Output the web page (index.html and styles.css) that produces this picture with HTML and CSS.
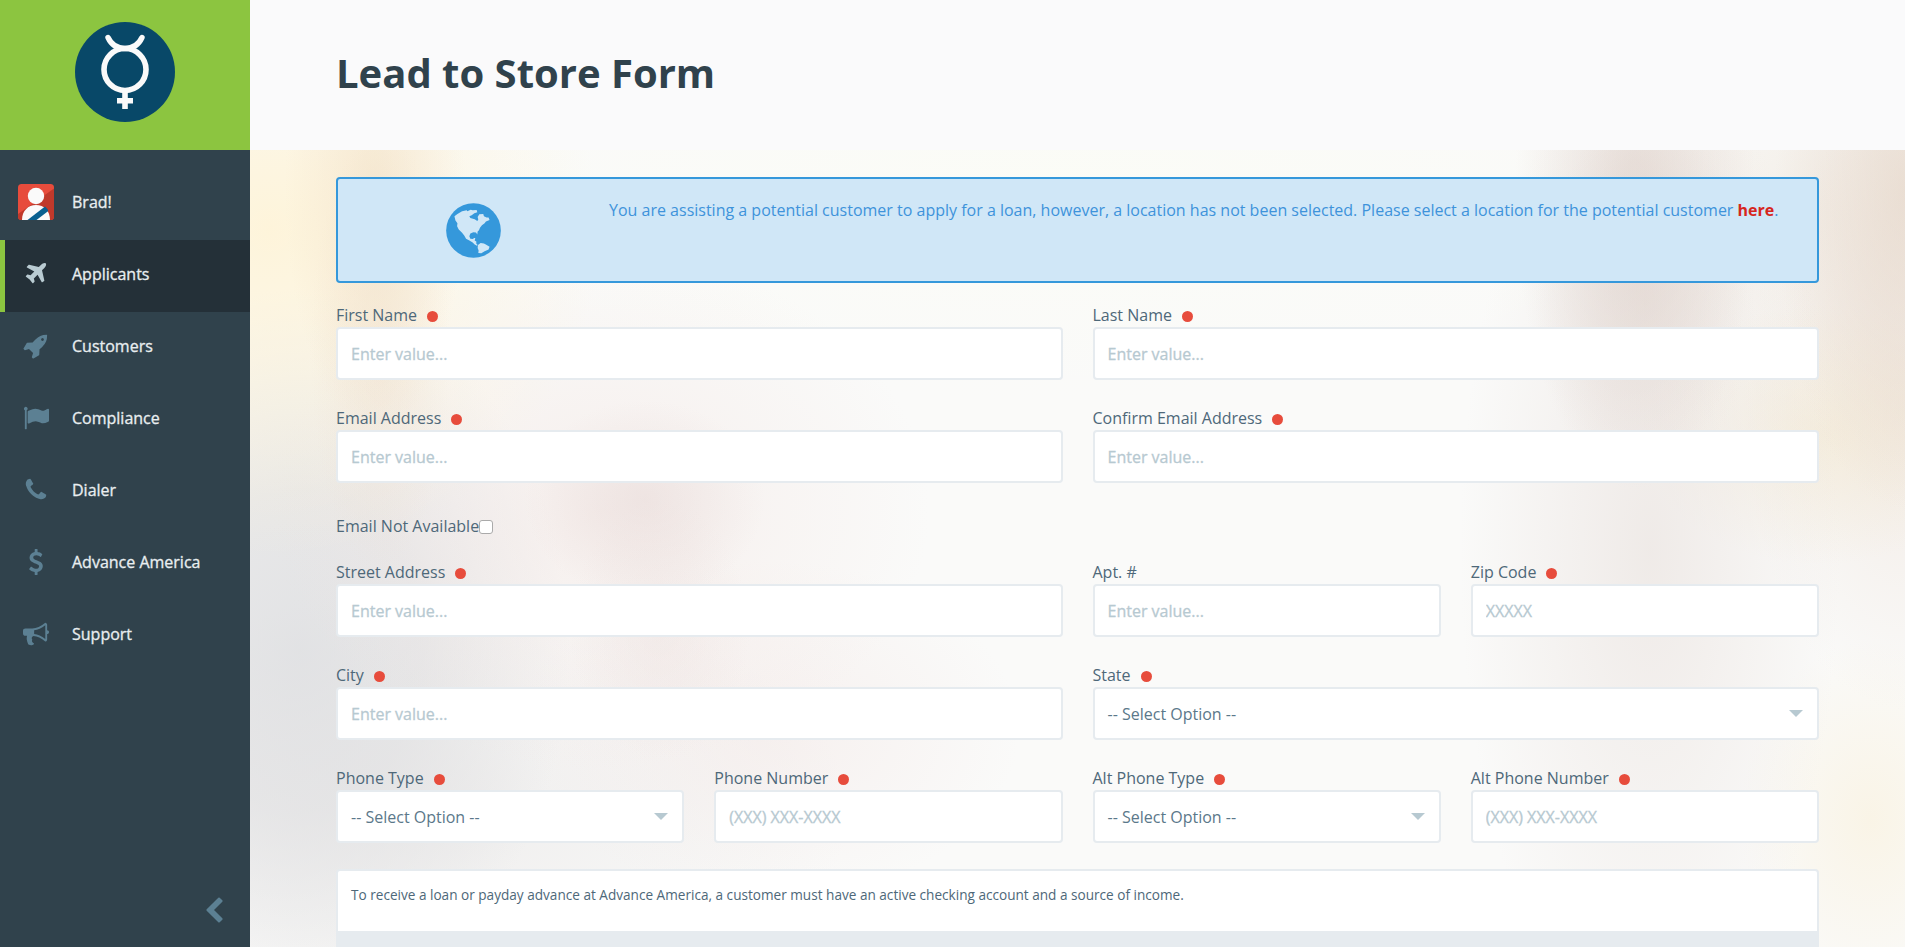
FILE: index.html
```html
<!DOCTYPE html>
<html lang="en">
<head>
<meta charset="utf-8">
<title>Lead to Store Form</title>
<link rel="stylesheet" href="styles.css">
</head>
<body>
<div class="app">
  <aside class="sidebar">
    <div class="brand">
      <svg class="logo" viewBox="0 0 100 100">
        <circle cx="50" cy="50" r="50" fill="#084868"/>
        <g fill="none" stroke="#fafafa">
          <circle cx="50" cy="47.500" r="21" stroke-width="5.600"/>
          <path d="M33 15.500C36 22 42 26.500 50 26.500S64 22 67 15.500" stroke-width="5.400" stroke-linecap="round"/>
          <path d="M50 69V87M42 78.700H58" stroke-width="5.600"/>
        </g>
      </svg>
    </div>
    <nav class="nav">
      <a class="nav-item"><span class="nav-icon"><svg class="avatar" viewBox="0 0 36 36">
        <rect width="36" height="36" rx="3.500" fill="#e74c3c"/>
        <path d="M36 4.500V32.500a3.500 3.500 0 0 1-3.500 3.500H3.500A3.500 3.500 0 0 1 0 32.500V30Z" fill="#c0392b"/>
        <circle cx="18" cy="12" r="8.200" fill="#fafafa"/>
        <path d="M4 36C4 27 10 21 18 21S32 27 32 36Z" fill="#fafafa"/>
        <path d="M9.500 36L27 22.500Q29.500 24.500 30.300 27L18.500 36Z" fill="#096090"/>
      </svg></span>Brad!</a>
      <a class="nav-item active"><span class="nav-icon"><svg class="fa" viewBox="0 0 1792 1792"><path d="M1568 160q44 52 12 148t-108 172l-161 161 160 696q5 19-12 33l-128 96q-7 6-19 6-4 0-7-1-15-3-21-16l-279-508-259 259 53 194q5 17-8 31l-96 96q-9 9-23 9h-2q-15-2-24-13l-189-252-252-189q-11-7-13-23-1-13 9-25l96-97q9-9 23-9 6 0 8 1l194 53 259-259-508-279q-14-8-17-24-2-16 9-27l128-128q14-13 30-8l665 159 160-160q76-76 172-108t148 12z"/></svg></span>Applicants</a>
      <a class="nav-item"><span class="nav-icon"><svg class="fa" viewBox="0 0 1792 1792"><path d="M1440 448q0-40-28-68t-68-28-68 28-28 68 28 68 68 28 68-28 28-68zm224-288q0 249-75.500 430.500t-253.500 360.500q-81 80-195 176l-20 379q-2 16-16 26l-384 224q-7 4-16 4-12 0-23-9l-64-64q-13-14-8-32l85-276-281-281-276 85q-3 1-9 1-14 0-23-9l-64-64q-17-19-5-39l224-384q10-14 26-16l379-20q96-114 176-195 188-187 358-258t431-71q14 0 24 9.500t10 22.500z"/></svg></span>Customers</a>
      <a class="nav-item"><span class="nav-icon"><svg class="fa" viewBox="0 0 1792 1792"><path d="M320 256q0 72-64 110v1266q0 13-9.500 22.500t-22.500 9.500h-64q-13 0-22.500-9.500t-9.500-22.500v-1266q-64-38-64-110 0-53 37.500-90.500t90.500-37.500 90.500 37.500 37.500 90.500zm1472 64v763q0 25-12.500 38.500t-39.500 27.500q-215 116-369 116-61 0-123.500-22t-108.500-48-115.500-48-142.500-22q-192 0-464 146-17 9-33 9-26 0-45-19t-19-45v-742q0-32 31-55 21-14 79-43 236-120 421-120 107 0 200 29t219 88q38 19 88 19 54 0 117.500-21t110-47 88-47 54.500-21q26 0 45 19t19 45z"/></svg></span>Compliance</a>
      <a class="nav-item"><span class="nav-icon"><svg class="fa" viewBox="0 0 1792 1792"><path d="M1600 1240q0 27-10 70.500t-21 68.500q-21 50-122 106-94 51-186 51-27 0-53-3.500t-57.500-12.500-47-14.500-55.500-20.500-49-18q-98-35-175-83-127-79-264-216t-216-264q-48-77-83-175-3-9-18-49t-20.500-55.500-14.500-47-12.500-57.500-3.500-53q0-92 51-186 56-101 106-122 25-11 68.500-21t70.500-10q14 0 21 3 18 6 53 76 11 19 30 54t35 63.500 31 53.500q3 4 17.500 25t21.500 35.500 7 28.500q0 20-28.500 50t-62 55-62 53-28.500 46q0 9 5 22.500t8.500 20.500 14 24 11.500 19q76 137 174 235t235 174q2 1 19 11.500t24 14 20.500 8.500 22.500 5q18 0 46-28.500t53-62 55-62 50-28.500q14 0 28.500 7t35.500 21.500 25 17.500q25 15 53.500 31t63.500 35 54 30q70 35 76 53 3 7 3 21z"/></svg></span>Dialer</a>
      <a class="nav-item"><span class="nav-icon"><svg class="fa" viewBox="0 0 1792 1792"><path d="M1362 1185q0 153-99.500 263.500t-258.500 136.500v175q0 14-9 23t-23 9h-135q-13 0-22.500-9.500t-9.500-22.500v-175q-66-9-127.500-31t-101.500-44.500-74-48-46.500-37.500-17.500-18q-17-21-2-41l103-135q7-10 23-12 15-2 24 9l2 2q113 99 243 125 37 8 74 8 81 0 142.500-43t61.500-122q0-28-15-53t-33.500-42-58.500-37.500-66-32-80-32.500q-39-16-61.500-25t-61.500-26.500-62.500-31-56.500-35.500-53.500-42.500-43.500-49-35.500-58-21-66.500-8.500-78q0-138 98-242t255-134v-180q0-13 9.500-22.500t22.500-9.500h135q14 0 23 9t9 23v176q57 6 110.500 23t87 33.500 63.500 37.500 39 29 15 14q17 18 5 38l-81 146q-8 15-23 16-14 3-27-7-3-3-14.500-12t-39-26.500-58.500-32-74.500-26-85.500-11.500q-95 0-155 43t-60 111q0 26 8.500 48t29.500 41.500 39.500 33 56 31 60.500 27 70 27.500q53 20 81 31.500t76 35 75.500 42.500 62 50 53 63.500 31.500 76.500 13 94z"/></svg></span>Advance America</a>
      <a class="nav-item"><span class="nav-icon"><svg class="fa" viewBox="0 0 1792 1792"><path d="M1664 640q53 0 90.500 37.500t37.500 90.500-37.500 90.500-90.500 37.500v384q0 52-38 90t-90 38q-417-347-812-380-58 19-91 66t-31 100.500 40 92.500q-20 33-23 65.500t6 58 33.500 55 48 50 61.500 50.500q-29 58-111.500 83t-168.500 11.500-132-55.500q-7-23-29.500-87.500t-32-94.500-23-89-15-101 3.500-98.500 22-110.500h-122q-66 0-113-47t-47-113v-192q0-66 47-113t113-47h480q435 0 896-384 52 0 90 38t38 90v384zm-128 604v-954q-394 302-768 343v270q377 42 768 341z"/></svg></span>Support</a>
    </nav>
    <div class="collapse"><svg class="fa" viewBox="0 0 1792 1792"><path d="M1427 301l-531 531 531 531q19 19 19 45t-19 45l-166 166q-19 19-45 19t-45-19l-742-742q-19-19-19-45t19-45l742-742q19-19 45-19t45 19l166 166q19 19 19 45t-19 45z"/></svg></div>
  </aside>
  <div class="page">
    <header class="header"><h1 class="title">Lead to Store Form</h1></header>
    <main class="content">
      <div class="notice">
        <svg class="globe" viewBox="18 22 165 166">
          <circle cx="100.500" cy="105" r="82.500" fill="#3598db"/>
          <g fill="#d0e7f7">
            <path d="M43 62L52 55 66 47 80 44 82 47 92 42 98 44 110 43 112 50 103 53 95 59 88 62 91 67 104 71 112 76 115 72 113 64 118 56 130 55 132 62 140 66 146 66 149 73 138 78 134 83 126 89 120 97 117 104 113 108 112 117 108 111 100 110 91 114 88 122 91 130 99 131 102 128 106 128 104 135 109 138 109 145 113 149 111 151 104 147 98 141 88 135 78 130 73 121 66 112 56 102 51 92 52 83 46 75Z"/>
            <path d="M114 149L122 143 132 144 139 148 149 154 146 162 134 168 124 174 115 173 116 165 113 158Z"/>
          </g>
        </svg>
        <p class="notice-text">You are assisting a potential customer to apply for a loan, however, a location has not been selected. Please select a location for the potential customer <a class="here">here</a>.</p>
      </div>
      <form class="form">
        <label class="field half"><span class="label req">First Name</span><input class="control" placeholder="Enter value..."></label>
        <label class="field half"><span class="label req">Last Name</span><input class="control" placeholder="Enter value..."></label>
        <label class="field half"><span class="label req">Email Address</span><input class="control" placeholder="Enter value..."></label>
        <label class="field half"><span class="label req">Confirm Email Address</span><input class="control" placeholder="Enter value..."></label>
        <label class="check">Email Not Available<input class="checkbox" type="checkbox"></label>
        <label class="field half"><span class="label req">Street Address</span><input class="control" placeholder="Enter value..."></label>
        <label class="field"><span class="label">Apt. #</span><input class="control" placeholder="Enter value..."></label>
        <label class="field"><span class="label req">Zip Code</span><input class="control" placeholder="XXXXX"></label>
        <label class="field half"><span class="label req">City</span><input class="control" placeholder="Enter value..."></label>
        <label class="field half"><span class="label req">State</span><span class="control select">-- Select Option --</span></label>
        <label class="field"><span class="label req">Phone Type</span><span class="control select">-- Select Option --</span></label>
        <label class="field"><span class="label req">Phone Number</span><input class="control" placeholder="(XXX) XXX-XXXX"></label>
        <label class="field"><span class="label req">Alt Phone Type</span><span class="control select">-- Select Option --</span></label>
        <label class="field"><span class="label req">Alt Phone Number</span><input class="control" placeholder="(XXX) XXX-XXXX"></label>
      </form>
      <section class="panel"><p class="panel-text">To receive a loan or payday advance at Advance America, a customer must have an active checking account and a source of income.</p></section>
    </main>
  </div>
</div>
</body>
</html>
```
FILE: styles.css
```css
* { box-sizing: border-box; }
body { margin: 0; font: 16px/22px "Open Sans", "Noto Sans", sans-serif; color: #4e6879; overflow: hidden; }
h1, p { margin: 0; }
.app { display: flex; height: 947px; overflow: hidden; }

.sidebar { width: 250px; flex: none; display: flex; flex-direction: column; background: #30424c; }
.brand { height: 150px; flex: none; padding-top: 22px; background: #8cc540; text-align: center; }
.logo { width: 100px; height: 100px; }
.nav { padding-top: 18px; }
.nav-item { display: flex; align-items: center; height: 72px; padding-bottom: 4px; color: #e9eef0; border-left: 5px solid transparent; -webkit-text-stroke: 0.3px; }
.nav-item.active { background: #243038; border-left-color: #8cc540; }
.nav-icon { width: 36px; margin: 0 18px 0 13px; display: flex; justify-content: center; }
.avatar { width: 36px; height: 36px; }
.fa { width: 26px; height: 26px; fill: #5c8093; }
.active .fa { fill: #b9cbd2; }
.collapse { margin-top: auto; height: 74px; padding: 24px 0 0 200px; }
.collapse .fa { width: 28px; height: 28px; }

.page { flex: 1; display: flex; flex-direction: column; }
.header { height: 150px; flex: none; padding: 45px 86px 0; background: #fafafb; }
.title { font-size: 40px; line-height: 56px; font-weight: 700; color: #30424c; }
.content {
  flex: 1; padding: 27px 86px 0;
  background:
    radial-gradient(ellipse 90px 240px at 125px 40px, rgba(240,219,190,.5), transparent),
    radial-gradient(ellipse 70px 220px at 130px 200px, rgba(238,222,205,.4), transparent),
    radial-gradient(ellipse 330px 330px at 20px 80px, rgba(255,242,208,.75), transparent),
    radial-gradient(ellipse 120px 100px at 395px 350px, rgba(224,206,204,.35), transparent),
    radial-gradient(ellipse 90px 130px at 410px 480px, rgba(232,218,216,.3), transparent),
    radial-gradient(ellipse 330px 260px at 350px 360px, rgba(240,224,220,.45), transparent),
    radial-gradient(ellipse 250px 170px at 520px 580px, rgba(242,230,228,.5), transparent),
    radial-gradient(ellipse 270px 360px at 50px 500px, rgba(216,217,220,.7) 0%, rgba(220,220,222,.6) 45%, transparent),
    radial-gradient(ellipse 400px 220px at 200px 660px, rgba(228,226,226,.5), transparent),
    radial-gradient(ellipse 120px 300px at 1385px 40px, rgba(222,208,201,.6) 10%, transparent),
    radial-gradient(ellipse 110px 180px at 1395px 150px, rgba(222,210,205,.35), transparent),
    radial-gradient(ellipse 190px 500px at 1400px 400px, rgba(232,224,220,.6), transparent),
    radial-gradient(ellipse 130px 320px at 1655px 40px, rgba(228,212,198,.65), transparent),
    radial-gradient(ellipse 180px 130px at 1570px 285px, rgba(242,230,202,.5), transparent),
    radial-gradient(ellipse 160px 300px at 1655px 260px, rgba(234,220,210,.5), transparent),
    radial-gradient(ellipse 220px 240px at 1560px 60px, rgba(243,238,231,.9), transparent),
    radial-gradient(ellipse 130px 180px at 1620px 670px, rgba(249,240,218,.6), transparent),
    radial-gradient(ellipse 700px 220px at 800px 30px, rgba(251,252,246,.9), transparent),
    #fafaf9;
}
.notice { display: grid; grid-template-columns: 271px 1fr; height: 106px; border: 2px solid #3598db; border-radius: 4px; background: #d0e7f7; }
.globe { width: 55px; height: 55px; margin: 24px auto 0; }
.notice-text { padding-top: 20px; color: #3e93db; white-space: nowrap; }
.here { color: #d6261d; font-weight: 700; }

.form { display: grid; grid-template-columns: repeat(4, 1fr); column-gap: 30px; row-gap: 27px; padding-top: 21px; }
.field { display: flex; flex-direction: column; }
.half { grid-column: span 2; }
.label { display: flex; align-items: center; height: 23px; padding-bottom: 2px; }
.req::after { content: ""; width: 11px; height: 11px; margin: 3px 0 0 10px; border-radius: 50%; background: #e74c3c; }
.control { width: 100%; height: 53px; padding: 0 13px; border: 2px solid #e6ebef; border-radius: 4px; background: #fff; font: inherit; color: #4e6879; }
.control::placeholder { color: #b7c9d1; opacity: 1; -webkit-text-stroke: 0.3px; }
.select { display: flex; align-items: center; justify-content: space-between; color: #5b788a; }
.select::after { content: ""; margin-right: 1px; border: 7px solid transparent; border-top-color: #b7c9d1; border-bottom: 0; }
.check { grid-column: span 4; display: flex; align-items: center; height: 24px; margin: 4px 0 -4px; }
.checkbox { width: 14px; height: 14px; margin: 1px 0 0; appearance: none; border: 1px solid #aaa; border-radius: 3px; background: #fff; }
.panel { margin-top: 26px; height: 100px; border: 2px solid #e6ebef; border-radius: 4px; background: linear-gradient(#fff 60px, #e6ebef 60px); }
.panel-text { padding: 13px; font-size: 13.6px; }
```
